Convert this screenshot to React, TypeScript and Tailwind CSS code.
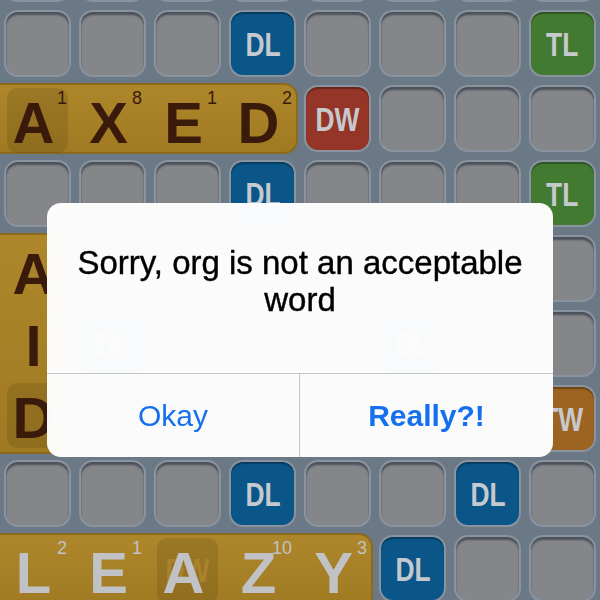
import React from "react";

// board layout, one string per row: . empty, d DL, t TL, w DW, W TW, # covered by a word
const ROWS = [
  "........",
  "...d...t",
  "####w...",
  "...d...t",
  "#.......",
  "#d...d..",
  "#......W",
  "...d..d.",
  "#####d..",
];

const PREMIUM: Record<string, { bg: string; label: string }> = {
  d: { bg: "bg-[#0a5688]", label: "DL" },
  t: { bg: "bg-[#437a31]", label: "TL" },
  w: { bg: "bg-[#953528]", label: "DW" },
  W: { bg: "bg-[#9d6320]", label: "TW" },
};

const FONT = "font-['Liberation_Sans',Arial,sans-serif]";
const GOLD = "border-[#8b6a1d] bg-gradient-to-b from-[#ae872b] to-[#a07a22]";

function Square({ kind }: { kind: string }) {
  const p = PREMIUM[kind];
  return (
    <div className="p-[4px]">
      <div className="h-full rounded-[14px] bg-[#8a94a0] p-[2px]">
        {p ? (
          <div
            className={`flex h-full items-center justify-center rounded-[12px] ${p.bg} shadow-[inset_0_2px_1px_rgba(0,0,0,0.3)]`}
          >
            <span className="inline-block scale-x-[0.8] pt-[2px] text-[33px] font-bold leading-none text-[#c6c9cd]">
              {p.label}
            </span>
          </div>
        ) : (
          <div className="h-full rounded-[12px] bg-[#84868a] shadow-[inset_0_3px_2px_#4c525a]" />
        )}
      </div>
    </div>
  );
}

interface LetterProps {
  ch: string;
  pts?: number;
  pale?: boolean;
  mark?: string;
  shaded?: boolean;
}

function Letter({ ch, pts, pale, mark, shaded }: LetterProps) {
  const color = pale ? "text-[#c0c2c5]" : "text-[#3a1b0b]";
  return (
    <div className="relative flex h-[71px] w-[75px] shrink-0 items-center justify-center">
      {shaded && (
        <div className="absolute inset-x-[7px] inset-y-[3px] flex items-center justify-center rounded-[10px] bg-black/10">
          {mark && (
            <span className="inline-block scale-x-[0.8] text-[33px] font-bold text-[#a9832d]">{mark}</span>
          )}
        </div>
      )}
      <span className={`relative pr-[8px] pt-[5px] text-[58px] font-bold leading-none ${color}`}>{ch}</span>
      {pts !== undefined && (
        <span className={`absolute right-[8px] top-[4px] text-[18px] leading-none ${color}`}>{pts}</span>
      )}
    </div>
  );
}

export default function App() {
  const squares: string[] = [];
  ROWS.forEach((row) => row.split("").forEach((c) => c !== "#" && squares.push(c)));

  return (
    <div className={`relative h-[600px] w-[600px] overflow-hidden bg-[#6b7886] ${FONT}`}>
      <div className="-mt-[69px] grid grid-cols-[repeat(8,75px)] grid-rows-[repeat(9,75px)]">
        {/* AXED */}
        <div className="col-start-1 col-span-4 row-start-3 py-[2px] pr-[2px]">
          <div className={`flex h-full rounded-r-[14px] border-y-2 border-r-2 ${GOLD}`}>
            <Letter ch="A" pts={1} shaded />
            <Letter ch="X" pts={8} />
            <Letter ch="E" pts={1} />
            <Letter ch="D" pts={2} />
          </div>
        </div>

        {/* AID, running down the left edge */}
        <div className="col-start-1 row-start-5 row-span-3 py-[2px] pr-[2px]">
          <div className={`flex h-full flex-col justify-around rounded-r-[14px] border-2 border-l-0 ${GOLD}`}>
            <Letter ch="A" pts={1} />
            <Letter ch="I" pts={1} />
            <Letter ch="D" pts={2} shaded />
          </div>
        </div>

        {/* LEAZY */}
        <div className="col-start-1 col-span-5 row-start-9 pt-[2px] pr-[2px]">
          <div className={`flex h-full rounded-tr-[14px] border-t-2 border-r-2 ${GOLD}`}>
            <Letter ch="L" pts={2} pale />
            <Letter ch="E" pts={1} pale />
            <Letter ch="A" pale shaded mark="DW" />
            <Letter ch="Z" pts={10} pale />
            <Letter ch="Y" pts={3} pale />
          </div>
        </div>

        {squares.map((kind, i) => (
          <Square key={i} kind={kind} />
        ))}
      </div>

      {/* alert */}
      <div className="absolute left-[47px] top-[203px] w-[506px] overflow-hidden rounded-[14px] bg-[#fdfdfd]/[0.985] backdrop-blur-[2px]">
        <div className="h-[170px] px-6 pt-[41px] text-center text-[33px] leading-[37px] text-black [-webkit-text-stroke:0.4px_black]">
          Sorry, org is not an acceptable word
        </div>
        <div className="grid h-[84px] grid-cols-2 border-t border-[#c4c5c9] text-[30px]">
          <div className="flex items-center justify-center border-r border-[#c4c5c9] text-[#1570ef]">Okay</div>
          <div className="flex items-center justify-center font-bold text-[#1570ef]">Really?!</div>
        </div>
      </div>
    </div>
  );
}
